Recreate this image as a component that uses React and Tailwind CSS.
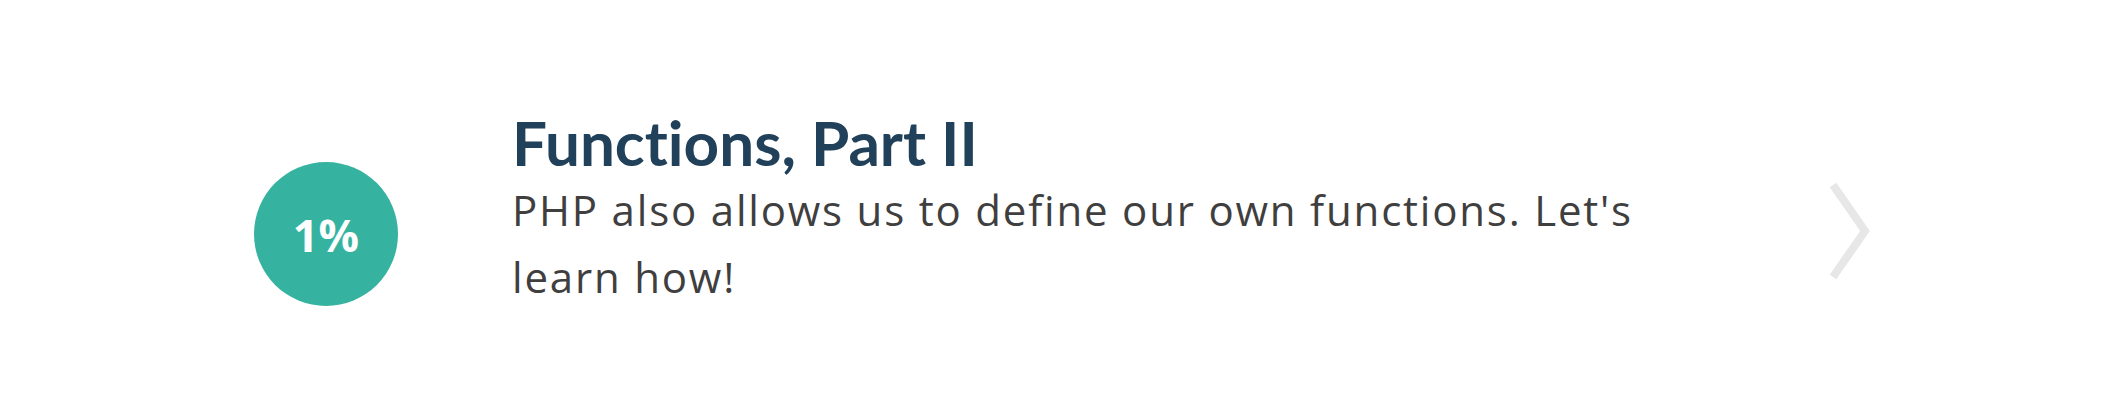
const App = () => {
  return (
    <div className="w-full h-[405px] bg-white flex items-start pt-[112px] pl-[254px]" style={{ fontFamily: 'Lato, "Open Sans", sans-serif' }}>
      {/* progress badge */}
      <div className="mt-[50px] w-[144px] h-[144px] shrink-0 rounded-full bg-[#35b3a0] flex items-center justify-center">
        <span className="text-white font-bold text-[45px] leading-none" style={{ fontFamily: '"Open Sans", sans-serif' }}>1%</span>
      </div>

      <div className="ml-[114px] w-[1180px] shrink-0">
        <h2 className="text-[62px] leading-[60px] font-bold text-[#21415a] [font-variant-ligatures:none]">Functions, Part II</h2>
        <p className="mt-[4px] text-[42px] leading-[67px] tracking-[1.8px] text-[#3f3f3f]" style={{ fontFamily: '"Open Sans", sans-serif' }}>
          PHP also allows us to define our own functions. Let's learn how!
        </p>
      </div>

      <svg className="ml-[137px] mt-[69px] shrink-0" width="44" height="100" viewBox="0 0 44 100" fill="none">
        <polyline points="4,4 36,50 4,96" stroke="#e7e7e7" strokeWidth="8" />
      </svg>
    </div>
  );
};

export default App;
